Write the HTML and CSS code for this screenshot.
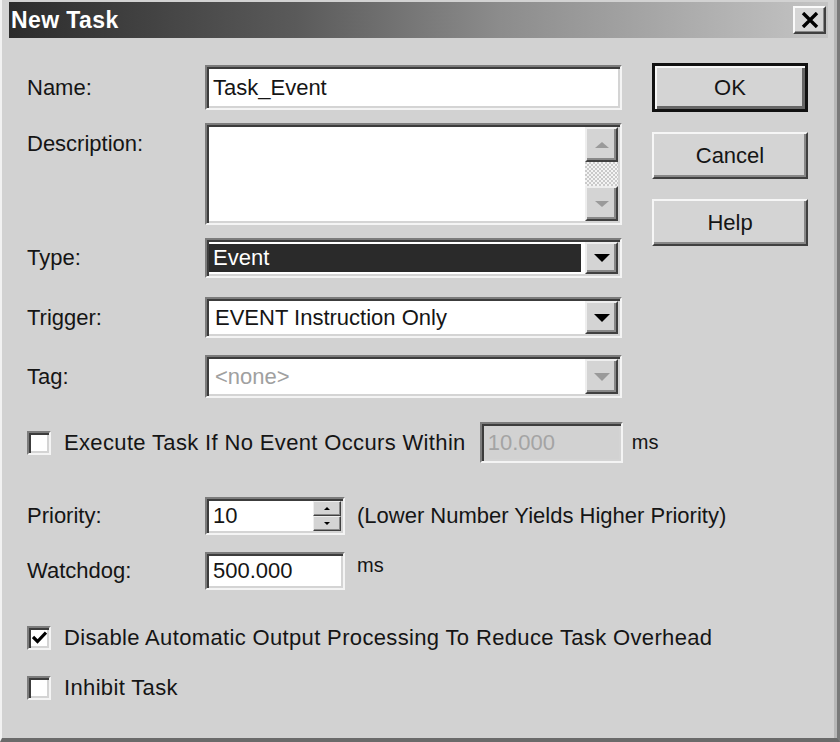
FILE: index.html
```html
<!DOCTYPE html>
<html lang="en">
<head>
  <meta charset="UTF-8" />
  <title>New Task</title>
  <link rel="stylesheet" href="styles.css">
</head>
<body>
  <div class="window">
    <div class="titlebar">
      <span class="title">New Task</span>
      <button class="close" type="button">
        <svg width="18" height="16" viewBox="0 0 18 16"><path d="M2 1 L16 15 M16 1 L2 15" stroke="#000" stroke-width="3.4"/></svg>
      </button>
    </div>

    <div class="main">
      <div class="form">
        <div class="row row-name">
          <label class="label">Name:</label>
          <div class="field"><span class="value">Task_Event</span></div>
        </div>

        <div class="row row-desc">
          <label class="label">Description:</label>
          <div class="field textarea">
            <div class="scrollbar">
              <div class="sb-btn"><span class="tri up small"></span></div>
              <div class="sb-track"></div>
              <div class="sb-btn"><span class="tri small"></span></div>
            </div>
          </div>
        </div>

        <div class="row row-type">
          <label class="label">Type:</label>
          <div class="field combo">
            <div class="combo-value selected">Event</div>
            <div class="drop"><span class="tri"></span></div>
          </div>
        </div>

        <div class="row row-trigger">
          <label class="label">Trigger:</label>
          <div class="field combo">
            <div class="combo-value">EVENT Instruction Only</div>
            <div class="drop"><span class="tri"></span></div>
          </div>
        </div>

        <div class="row row-tag">
          <label class="label">Tag:</label>
          <div class="field combo disabled">
            <div class="combo-value">&lt;none&gt;</div>
            <div class="drop"><span class="tri grey"></span></div>
          </div>
        </div>

        <div class="row row-exec">
          <span class="check"></span>
          <span class="check-text">Execute Task If No Event Occurs Within</span>
          <div class="field small-field disabled"><span class="value">10.000</span></div>
          <span class="unit unit-exec">ms</span>
        </div>

        <div class="row row-priority">
          <label class="label">Priority:</label>
          <div class="field num">
            <span class="value">10</span>
            <div class="spin">
              <div class="spin-btn"><span class="tri up tiny"></span></div>
              <div class="spin-btn"><span class="tri tiny"></span></div>
            </div>
          </div>
          <span class="unit">(Lower Number Yields Higher Priority)</span>
        </div>

        <div class="row row-watchdog">
          <label class="label">Watchdog:</label>
          <div class="field num"><span class="value">500.000</span></div>
          <span class="unit">ms</span>
        </div>

        <div class="row row-disable">
          <span class="check">
            <svg width="15" height="13" viewBox="0 0 15 13"><path d="M1 6 L5.5 10.5 L14 1.5" fill="none" stroke="#000" stroke-width="3.2"/></svg>
          </span>
          <span class="check-text">Disable Automatic Output Processing To Reduce Task Overhead</span>
        </div>

        <div class="row row-inhibit">
          <span class="check"></span>
          <span class="check-text">Inhibit Task</span>
        </div>
      </div>

      <div class="buttons">
        <button class="btn default" type="button">OK</button>
        <button class="btn" type="button">Cancel</button>
        <button class="btn" type="button">Help</button>
      </div>
    </div>
  </div>
</body>
</html>
```

FILE: styles.css
```css
* {
  box-sizing: border-box;
}
body {
  margin: 0;
  background: #d2d2d2;
  font-family: "Liberation Sans", Arial, sans-serif;
  font-size: 22px;
  color: #151515;
}
.window {
  width: 840px;
  height: 742px;
  padding: 2px 9px 0 7px;
  background: #d2d2d2;
  border-left: 2px solid #f2f2f2;
  border-right: 3px solid #7a7a7a;
  border-bottom: 4px solid #6a6a6a;
  box-shadow: inset -3px 0 #b8b8b8;
}
.titlebar {
  height: 36px;
  display: flex;
  align-items: center;
  justify-content: space-between;
  padding: 0 2px 0 2px;
  background: linear-gradient(to right, #2c2c2c, #5a5a5a 35%, #8c8c8c 60%, #c4c4c4);
}
.title {
  color: #fff;
  font-weight: bold;
  font-size: 23px;
  letter-spacing: 0.4px;
}
.close {
  width: 33px;
  height: 28px;
  padding: 0;
  display: flex;
  align-items: center;
  justify-content: center;
  background: #d6d6d6;
  border: 2px solid;
  border-color: #fafafa #404040 #404040 #fafafa;
  box-shadow: inset -1px -1px #888;
}
.main {
  display: flex;
  padding-left: 18px;
}
.form {
  width: 595px;
  flex: none;
}
.row {
  display: flex;
  align-items: center;
  white-space: nowrap;
}
.label {
  width: 178px;
  flex: none;
}
.field {
  position: relative;
  width: 417px;
  flex: none;
  background: #fff;
  border: 2px solid;
  border-color: #7c7c7c #f4f4f4 #f4f4f4 #7c7c7c;
  box-shadow: inset 2px 2px #3c3c3c, inset -2px -2px #d4d4d4;
  display: flex;
  align-items: center;
}
.value {
  padding-left: 6px;
}
.row-name { margin-top: 27px; height: 45px; }
.row-name .field { height: 45px; }
.row-desc { margin-top: 13px; height: 102px; align-items: flex-start; }
.row-desc .label { padding-top: 8px; }
.textarea { height: 102px; justify-content: flex-end; align-items: stretch; padding: 2px 2px 2px 0; }
.scrollbar {
  width: 33px;
  display: flex;
  flex-direction: column;
}
.sb-btn, .drop, .spin-btn {
  display: flex;
  align-items: center;
  justify-content: center;
  background: #d4d4d4;
  border: 2px solid;
  border-color: #eeeeee #404040 #404040 #eeeeee;
  box-shadow: inset -2px -2px #888;
}
.sb-btn { height: 35px; }
.sb-track {
  flex: 1;
  background: repeating-conic-gradient(#f4f4f4 0 25%, #cacaca 0 50%) 0 0 / 4px 4px;
}
.tri {
  width: 0;
  height: 0;
  border-left: 8px solid transparent;
  border-right: 8px solid transparent;
  border-top: 8px solid #000;
}
.tri.up {
  border-top: 0;
  border-bottom: 8px solid #000;
}
.tri.small {
  border-left-width: 7px;
  border-right-width: 7px;
  border-top-color: #9a9a9a;
  border-bottom-color: #9a9a9a;
  border-top-width: 6px;
}
.tri.small.up { border-top-width: 0; border-bottom-width: 6px; }
.tri.grey { border-top-color: #9a9a9a; }
.tri.tiny {
  border-left-width: 3px;
  border-right-width: 3px;
  border-top-width: 3px;
}
.tri.tiny.up { border-top-width: 0; border-bottom-width: 3px; }
.combo { padding: 2px; justify-content: space-between; align-items: stretch; }
.combo-value {
  flex: 1;
  display: flex;
  align-items: center;
  padding-left: 6px;
  margin-right: 2px;
}
.combo-value.selected {
  background: #2a2a2a;
  color: #fff;
  border: 2px solid #fff;
  border-left: 0;
  padding-left: 4px;
}
.drop { width: 33px; }
.disabled .combo-value { color: #a0a0a0; }
.row-type { margin-top: 13px; height: 40px; }
.row-type .field { height: 40px; }
.row-trigger { margin-top: 19px; height: 41px; }
.row-trigger .field { height: 41px; }
.row-tag { margin-top: 17px; height: 43px; }
.row-tag .field { height: 43px; }
.check {
  width: 24px;
  height: 24px;
  flex: none;
  display: flex;
  align-items: center;
  justify-content: center;
  background: #fff;
  border: 2px solid;
  border-color: #7c7c7c #f4f4f4 #f4f4f4 #7c7c7c;
  box-shadow: inset 2px 2px #3c3c3c, inset -2px -2px #d4d4d4;
}
.check-text {
  margin-left: 13px;
  letter-spacing: 0.35px;
}
.row-exec { margin-top: 24px; height: 41px; }
.small-field {
  width: 143px;
  height: 41px;
  margin-left: 14px;
}
.small-field.disabled {
  background: #d2d2d2;
  color: #a4a4a4;
}
.unit {
  margin-left: 12px;
}
.unit-exec {
  margin-left: 9px;
  font-size: 20px;
}
.row-priority { margin-top: 34px; height: 38px; }
.num { width: 140px; height: 38px; justify-content: space-between; align-items: stretch; }
.num .value { align-self: center; }
.spin {
  width: 30px;
  padding: 2px 2px 2px 0;
  display: flex;
  flex-direction: column;
}
.spin-btn { flex: 1; border-width: 1px; box-shadow: inset -1px -1px #888; }
.row-watchdog { margin-top: 17px; height: 38px; }
.row-watchdog .unit { font-size: 20px; align-self: flex-start; padding-top: 2px; }
.row-disable { margin-top: 35px; height: 25px; }
.row-inhibit { margin-top: 25px; height: 25px; }
.buttons {
  margin-left: 30px;
  padding-top: 25px;
  display: flex;
  flex-direction: column;
  gap: 20px;
}
.btn {
  width: 156px;
  height: 47px;
  font: inherit;
  color: #151515;
  background: #d4d4d4;
  border: 2px solid;
  border-color: #f6f6f6 #404040 #404040 #f6f6f6;
  box-shadow: inset -2px -2px #888;
}
.btn.default {
  height: 49px;
  border: 3px solid #111;
  box-shadow: inset 2px 2px #f6f6f6, inset -3px -3px #666;
}
```
